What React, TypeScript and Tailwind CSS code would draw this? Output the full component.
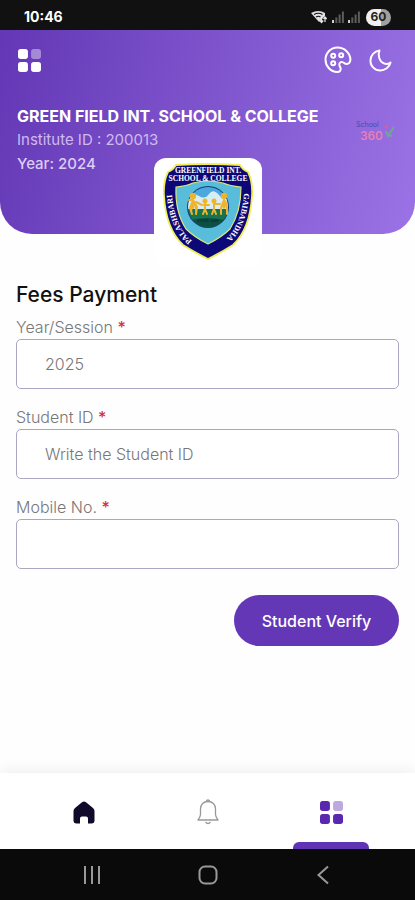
import type { ReactNode } from "react";

const GridIcon = ({ className }: { className?: string }) => (
  <svg viewBox="0 0 22 22" className={className} fill="currentColor" aria-hidden="true">
    <rect x="0" y="0" width="9.5" height="9.5" rx="2.6" />
    <rect x="12.5" y="0" width="9.5" height="9.5" rx="2.6" opacity="0.4" />
    <rect x="0" y="12.5" width="9.5" height="9.5" rx="2.6" />
    <rect x="12.5" y="12.5" width="9.5" height="9.5" rx="2.6" />
  </svg>
);

const StatusBar = () => (
  <div className="flex h-[30px] items-center justify-between bg-[#111111] px-6 text-white">
    <span className="pt-1 text-sm font-bold">10:46</span>
    <div className="flex items-center gap-1 pt-1">
      <svg viewBox="0 0 18 14" className="h-3.5 w-[18px]" aria-hidden="true">
        <path d="M1 3 Q8.500 -1 15 3 L15 6 L9 12 Z" fill="#e0e0e0" />
        <path d="M4 4.500 Q8.500 2 12.500 4.500 M6 7 Q8.500 5.500 10.500 7" stroke="#111" strokeWidth="1.1" fill="none" />
        <path d="M11.500 7v5M9.800 10.500l1.700 2 1.700-2M15 12V7.500M13.500 9L15 7l1.700 2" stroke="#e8e8e8" strokeWidth="1.2" fill="none" />
      </svg>
      {[0, 1].map((i) => (
        <svg key={i} viewBox="0 0 12 12" className="h-3 w-3" fill="#5c5c5c" aria-hidden="true">
          <rect x="0" y="9" width="2" height="3" fill="#d0d0d0" />
          <rect x="3.3" y="6.5" width="2" height="5.5" />
          <rect x="6.6" y="3.5" width="2" height="8.5" />
          <rect x="9.9" y="0.5" width="2" height="11.5" />
        </svg>
      ))}
      <span className="ml-0.5 flex h-[17px] w-[25px] items-center justify-center rounded-full bg-linear-to-r from-[#f0f0f0] from-60% to-[#a0a0a0] to-60% text-xs font-bold text-[#222222]">
        60
      </span>
    </div>
  </div>
);

const SchoolCrest = () => (
  <svg viewBox="0 0 92 98" className="h-[98px] w-[92px]" role="img" aria-label="Greenfield Int. School & College">
    <defs>
      <clipPath id="scene">
        <circle cx="46" cy="45" r="20" />
      </clipPath>
      <path id="left-arc" d="M30 79 Q12 64 10 31" />
      <path id="right-arc" d="M82 31 Q80 62 63 78" />
    </defs>
    <path
      d="M6 10 Q11 8 14 3 Q46 1 78 3 Q81 8 86 10 Q91 20 90 34 Q88 67 71 83 Q60 90 46 97 Q32 90 21 83 Q4 67 2 34 Q1 20 6 10 Z"
      fill="#0c0878"
      stroke="#f0ee55"
      strokeWidth="1.8"
    />
    <path
      d="M14 25 Q25 24 31 21 Q46 17 61 21 Q68 24 79 25 Q79 50 68 67 Q60 75 46 82 Q32 75 24 67 Q13 50 14 25 Z"
      fill="#58bddb"
      stroke="#d9e57c"
      strokeWidth="1.2"
    />
    <circle cx="46" cy="45" r="21" fill="#173f77" />
    <g clipPath="url(#scene)">
      <rect x="25" y="24" width="42" height="16" fill="#4ba7dd" />
      <path d="M25 35q6-5 12-1t10-2 10 1 10 0v14H25z" fill="#d9edf4" />
      <rect x="25" y="47" width="42" height="20" fill="#167451" />
      <path d="M25 59q20-6 42 0v10H25z" fill="#0c4f43" />
    </g>
    <g fill="#efb42c" stroke="#efb42c" strokeWidth="2" strokeLinecap="round">
      <circle cx="31" cy="34" r="2.2" />
      <path d="M31 38l-3 8 2 6 M31 38l4 7-1 7 M31 38h-4 M31 38v8 M34 40l6 3" />
      <circle cx="43" cy="39" r="1.5" />
      <path d="M43 42v5l-2 5 M43 47l2 5 M42 43h5" />
      <circle cx="52" cy="39" r="1.5" />
      <path d="M52 42v5l-2 5 M52 47l2 5 M52 42l6 0" />
      <circle cx="62" cy="34" r="2.2" />
      <path d="M62 38l-3 8v6 M62 38l3 8v6 M62 38l3 4 M62 38v8" />
    </g>
    <g fill="#ffffff" fontFamily="Liberation Serif, serif" fontWeight="700">
      <text x="46" y="10.5" fontSize="7.5" textAnchor="middle">GREENFIELD INT.</text>
      <text x="46" y="19" fontSize="7.5" textAnchor="middle">SCHOOL &amp; COLLEGE</text>
      <text fontSize="8">
        <textPath href="#left-arc">PALASHBARI</textPath>
      </text>
      <text fontSize="8">
        <textPath href="#right-arc">GAIBANDHA</textPath>
      </text>
      <text x="46" y="60" fontSize="4" textAnchor="middle" fill="#082d33">ESTD: 2006</text>
    </g>
  </svg>
);

const Header = () => (
  <header className="relative h-[204px] rounded-b-[32px] bg-linear-[105deg] from-[#6337b5] to-[#9c73e6] px-[17px] text-white">
    <div className="flex h-[60px] items-center justify-between">
      <button type="button" aria-label="Menu" className="ml-px">
        <GridIcon className="h-[23px] w-[23px]" />
      </button>
      <div className="flex items-center gap-[17px] pr-1.5">
        <button type="button" aria-label="Theme">
          <svg viewBox="0 0 28 28" className="h-7 w-7" fill="none" stroke="currentColor" strokeWidth="2" aria-hidden="true">
            <path d="M13.5 1.5C6.8 1.5 1.5 6.9 1.5 13.8c0 6.5 5.2 12 11.7 12.2 2.5.1 3.900-1.500 3.400-3.700-.4-1.700-1.300-2.500-1.300-3.900 0-1.700 1.400-2.600 3.100-2.300 1.700.4 2.100 2 4.200 2 2.500 0 3.900-2.100 3.800-4.800C26 6.700 20.400 1.500 13.500 1.500z" />
            <circle cx="9.2" cy="9.8" r="2" />
            <circle cx="17.2" cy="9.2" r="2" />
            <circle cx="9.2" cy="17.3" r="2" />
          </svg>
        </button>
        <button type="button" aria-label="Dark mode">
          <svg viewBox="0 0 24 24" className="h-[23px] w-[23px]" fill="none" stroke="currentColor" strokeWidth="2" strokeLinejoin="round" aria-hidden="true">
            <path d="M11 1.500C5.500 2.200 1.500 6.800 1.500 12.200c0 5.700 4.600 10.300 10.300 10.300 4.900 0 9.500-3.500 10.700-8.500-2 1.500-4.700 2-7 1-4.700-1.900-6.700-8.500-4.500-13.500z" />
          </svg>
        </button>
      </div>
    </div>
    <div className="flex justify-between pt-3.5">
      <div className="leading-6">
        <h1 className="text-base font-bold whitespace-nowrap">GREEN FIELD INT. SCHOOL &amp; COLLEGE</h1>
        <p className="text-[15px] text-[#cfbaf0]">Institute ID : 200013</p>
        <p className="text-[15px] font-medium text-[#dccdf5]">Year: 2024</p>
      </div>
      <svg viewBox="0 0 40 24" className="mt-4 mr-0.5 h-6 w-10" role="img" aria-label="School 360" fontFamily="Inter, sans-serif">
        <text x="0" y="7" fontSize="7" fill="#3f4fae">School</text>
        <text x="4" y="20" fontSize="12" fontWeight="500" fill="#f27fac">360</text>
        <path d="M30 11l2 5 6-9M31 15l5 1" stroke="#6da894" strokeWidth="2" fill="none" />
        <circle cx="30" cy="7" r="1.5" fill="#e25b91" />
      </svg>
    </div>
    <div className="absolute top-32 left-1/2 flex h-[108px] w-[108px] -translate-x-1/2 justify-center rounded-xl bg-white pt-1">
      <SchoolCrest />
    </div>
  </header>
);

type FieldProps = {
  id: string;
  label: string;
  placeholder?: string;
};

const Field = ({ id, label, placeholder }: FieldProps) => (
  <div className="flex flex-col">
    <label htmlFor={id} className="text-base leading-6 font-light text-[#777777]">
      {label} <span className="font-medium text-[#d5303a]">*</span>
    </label>
    <input
      id={id}
      placeholder={placeholder}
      className="h-[50px] w-full rounded-[5px] border border-[#aaa7c5] bg-white px-7 text-base font-light text-[#777777] outline-none placeholder:text-[#777777]"
    />
  </div>
);

const TabLink = ({ label, active, children }: { label: string; active?: boolean; children: ReactNode }) => (
  <a href="#" aria-label={label} className="relative flex flex-1 items-center justify-center">
    {children}
    {active && <span className="absolute bottom-0 left-1/2 h-[7px] w-[76px] -translate-x-1/2 rounded-t-md bg-[#6033b4]" />}
  </a>
);

const BottomNav = () => (
  <nav className="mt-auto flex h-[76px] bg-white px-[22px] pt-0.5 shadow-[0_-2px_14px_rgba(0,0,0,0.07)]">
    <TabLink label="Home">
      <svg viewBox="0 0 22 23" className="h-[23px] w-[22px]" fill="#120a2b" aria-hidden="true">
        <path d="M9 1.200Q11 -.3 13 1.200L20 7Q21.500 8.300 21.500 10V19.500Q21.500 22.500 18.500 22.500H15V17.500Q15 15.500 13 15.500H9Q7 15.500 7 17.500V22.500H3.500Q.5 22.500 .5 19.500V10Q.5 8.300 2 7Z" />
      </svg>
    </TabLink>
    <TabLink label="Notifications">
      <svg viewBox="0 0 22 26" className="h-[26px] w-[22px]" fill="none" stroke="#999999" strokeWidth="1.3" strokeLinejoin="round" aria-hidden="true">
        <path d="M11 2.500C6 2.500 3.500 6 3.500 10v5.500c0 2-.7 3-2.500 5.500h20c-1.800-2.500-2.500-3.500-2.500-5.500V10c0-4-2.500-7.500-7.500-7.500z" />
        <path d="M9.500 2.500a1.500 1.500 0 0 1 3 0M8.500 23q2.500 3 5 0" />
      </svg>
    </TabLink>
    <TabLink label="Services" active>
      <GridIcon className="h-[23px] w-[23px] text-[#5a28b0]" />
    </TabLink>
  </nav>
);

const SystemBar = () => (
  <div className="flex h-[51px] items-center bg-[#0a0a0a] px-[34px] text-[#999999]">
    <button type="button" aria-label="Recent apps" className="flex flex-1 justify-center">
      <svg viewBox="0 0 18 18" className="h-[18px] w-[18px]" stroke="currentColor" strokeWidth="2" aria-hidden="true">
        <path d="M2 0v18M9 0v18M16 0v18" />
      </svg>
    </button>
    <button type="button" aria-label="Home screen" className="flex flex-1 justify-center">
      <svg viewBox="0 0 20 20" className="h-5 w-5" fill="none" stroke="currentColor" strokeWidth="2" aria-hidden="true">
        <rect x="1.5" y="1.5" width="17" height="17" rx="5.5" />
      </svg>
    </button>
    <button type="button" aria-label="Back" className="flex flex-1 justify-center">
      <svg viewBox="0 0 12 20" className="h-5 w-3" fill="none" stroke="currentColor" strokeWidth="2" aria-hidden="true">
        <path d="M11 1.500L1.500 10 11 18.500" />
      </svg>
    </button>
  </div>
);

const App = () => {
  return (
    <div className="flex min-h-screen flex-col bg-[#fefefe] font-[Inter,sans-serif]">
      <StatusBar />
      <Header />
      <main className="px-4 pt-[47px] pb-8">
        <h2 className="text-[21px] leading-7 font-medium text-[#111111]">Fees Payment</h2>
        <form className="mt-1.5 flex flex-col" onSubmit={(e) => e.preventDefault()}>
          <div className="flex flex-col gap-4">
            <Field id="session" label="Year/Session" placeholder="2025" />
            <Field id="student-id" label="Student ID" placeholder="Write the Student ID" />
            <Field id="mobile" label="Mobile No." />
          </div>
          <button
            type="submit"
            className="mt-[26px] h-[51px] w-[165px] self-end rounded-full bg-[#6337b5] text-base font-medium text-white"
          >
            Student Verify
          </button>
        </form>
      </main>
      <BottomNav />
      <SystemBar />
    </div>
  );
};

export default App;
